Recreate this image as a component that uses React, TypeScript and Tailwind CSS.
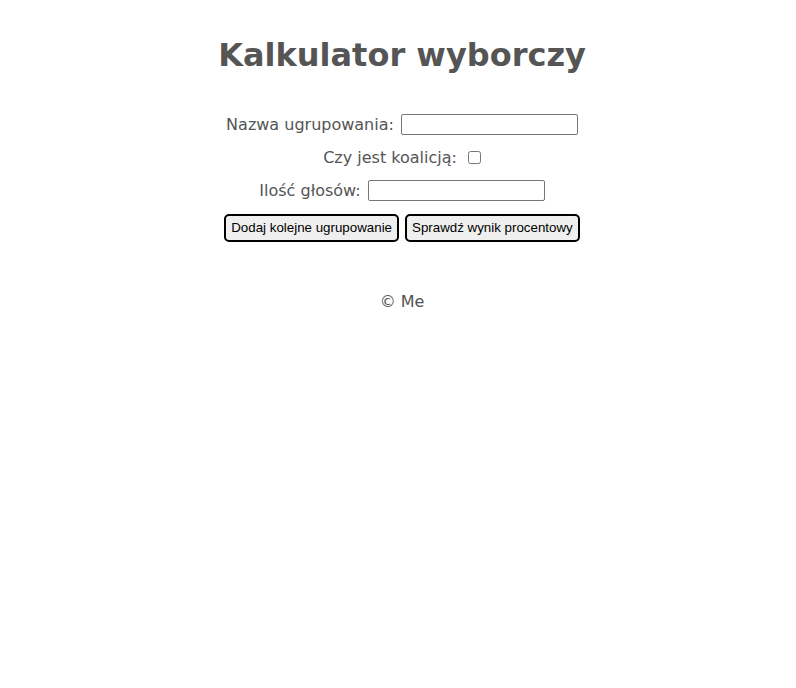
import React from 'react';

export default function App() {
  return (
    <div className="min-h-[688px] bg-white pl-2 text-center text-[#555555] [font-family:Verdana,'DejaVu_Sans',sans-serif]">
      <h1 className="pt-[37px] text-[32px] font-bold leading-[37px]">Kalkulator wyborczy</h1>

      <form className="mt-[40px] flex flex-col items-center text-[16px]">
        <div className="flex h-[21px] items-center gap-[7px]">
          <label>Nazwa ugrupowania:</label>
          <input
            type="text"
            className="h-[21px] w-[177px] rounded-[2px] border border-[#767676] bg-white"
          />
        </div>
        <div className="mt-[12px] flex h-[21px] items-center gap-[11px]">
          <label>Czy jest koalicją:</label>
          <input type="checkbox" className="h-[13px] w-[13px]" />
        </div>
        <div className="mt-[12px] flex h-[21px] items-center gap-[7px]">
          <label>Ilość głosów:</label>
          <input
            type="text"
            className="h-[21px] w-[177px] rounded-[2px] border border-[#767676] bg-white"
          />
        </div>
        <div className="mt-[13px] flex gap-[6px] [font-family:Arial,'Liberation_Sans',sans-serif]">
          <button
            type="button"
            className="h-[28px] rounded-[5px] border-2 border-black bg-[#efefef] px-[5px] text-[13.33px] text-black"
          >
            Dodaj kolejne ugrupowanie
          </button>
          <button
            type="button"
            className="h-[28px] rounded-[5px] border-2 border-black bg-[#efefef] px-[5px] text-[13.33px] text-black"
          >
            Sprawdź wynik procentowy
          </button>
        </div>
      </form>

      <footer className="mt-[48px] text-[16px]">© Me</footer>
    </div>
  );
}
